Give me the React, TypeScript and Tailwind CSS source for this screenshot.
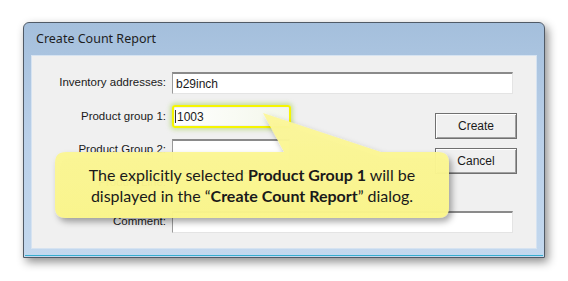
import React from "react";

const labelCls =
  "w-[140px] shrink-0 pr-[6px] text-right text-[11.5px] text-[#1a1a1a] leading-none";
const inputCls =
  "h-[22px] bg-white border-t-2 border-l border-t-[#8a8a8a] border-l-[#9a9a9a] border-b border-r border-b-[#e4e4e4] border-r-[#e4e4e4] text-[12px] text-[#1a1a1a] pl-[3px] flex items-center";

function Field({
  label,
  width,
  value,
  className = "",
}: {
  label: string;
  width: string;
  value?: string;
  className?: string;
}) {
  return (
    <div className={`flex items-center ${className}`}>
      <span className={labelCls}>{label}</span>
      <div className={`${inputCls} ${width}`}>{value}</div>
    </div>
  );
}

function WinButton({ text }: { text: string }) {
  return (
    <div className="w-[82px] h-[26px] border border-[#707070] bg-[#f0f0f0] shadow-[inset_1px_1px_0_#ffffff,inset_-1px_-1px_0_#a0a0a0] flex items-center justify-center text-[12px] text-[#1a1a1a]">
      {text}
    </div>
  );
}

export default function App() {
  return (
    <div
      className="relative w-[568px] h-[281px] bg-white overflow-hidden"
      style={{ fontFamily: '"Liberation Sans", Arial, sans-serif' }}
    >
      {/* dialog window */}
      <div className="ml-[23px] pt-[22px]">
        <div className="w-[522px] h-[236px] rounded-t-[6px] border border-[#505a66] bg-gradient-to-b from-[#a4bfdc] via-[#bad0e9] to-[#c3d8ee] shadow-[3px_4px_10px_rgba(0,0,0,0.45)] flex flex-col">
          <div
            className="h-[32px] pl-[12px] flex items-center text-[12.5px] text-[#1e1e1e]"
            style={{ fontFamily: '"Noto Sans", "Open Sans", sans-serif' }}
          >
            Create Count Report
          </div>
          <div className="ml-[7px] mr-[7px] h-[194px] bg-[#f0f0f0] border border-[#d6e3f1] pt-[16px]">
            <Field label="Inventory addresses:" width="w-[341px]" value="b29inch" />
            <div className="flex mt-[11px]">
              <div className="flex flex-col">
                <div className="flex items-center">
                  <span className={labelCls}>Product group 1:</span>
                  <div className="rounded-[3px] border-2 border-[#f5f500] p-[1px] shadow-[0_0_4px_2px_rgba(170,210,90,0.55)]">
                    <div className="h-[17px] w-[113px] bg-gradient-to-r from-white to-[#f3f7ea] text-[12px] text-[#1a1a1a] flex items-center">
                      <span className="w-px h-[13px] bg-[#333] mr-px" />
                      1003
                    </div>
                  </div>
                </div>
                <Field label="Product Group 2:" width="w-[118px]" className="mt-[11px]" />
                <Field label="Product Line:" width="w-[118px]" className="mt-[11px]" />
              </div>
              <div className="ml-auto mr-[19px] mt-[8px] flex flex-col gap-[9px]">
                <WinButton text="Create" />
                <WinButton text="Cancel" />
              </div>
            </div>
            <Field label="Comment:" width="w-[341px]" className="mt-[17px]" />
          </div>
          <div className="h-[1px] mx-[1px] mt-auto mb-[1px] bg-[#36aed0]" />
        </div>
      </div>

      {/* callout overlay */}
      <svg
        className="absolute left-0 top-0"
        width="568"
        height="281"
        viewBox="0 0 568 281"
      >
        <defs>
          <filter id="sh" x="-10%" y="-20%" width="130%" height="160%">
            <feDropShadow dx="3" dy="4" stdDeviation="3" floodColor="#000" floodOpacity="0.35" />
          </filter>
          <linearGradient id="yl" x1="0" y1="0" x2="0" y2="1">
            <stop offset="0" stopColor="#fcf79a" />
            <stop offset="1" stopColor="#fbf68a" />
          </linearGradient>
        </defs>
        <path
          d="M 66 152 L 284 152 L 263 113 L 381 152 L 438 152 Q 449 152 449 163 L 449 207 Q 449 218 438 218 L 66 218 Q 55 218 55 207 L 55 163 Q 55 152 66 152 Z"
          fill="url(#yl)"
          fillOpacity="0.96"
          filter="url(#sh)"
        />
      </svg>
      <div
        className="absolute left-[55px] top-[152px] w-[394px] h-[66px] flex flex-col items-center justify-center text-[16px] leading-[21px] text-[#1a1a1a]"
        style={{ fontFamily: 'Lato, "Open Sans", sans-serif' }}
      >
        <div>
          The explicitly selected <b>Product Group 1</b> will be
        </div>
        <div>
          displayed in the “<b>Create Count Report</b>” dialog.
        </div>
      </div>
    </div>
  );
}
